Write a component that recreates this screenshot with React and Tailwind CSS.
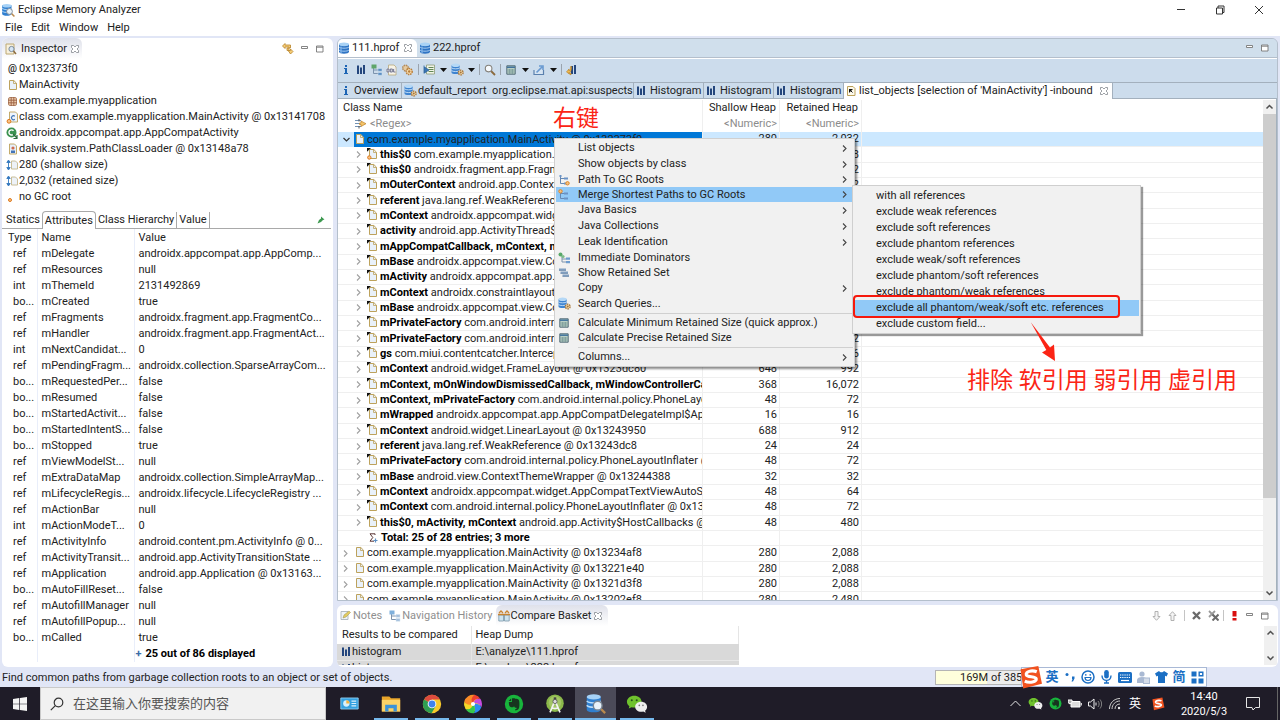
import React from "react";

const DB = () => (
  <svg width="12" height="12" viewBox="0 0 12 12" className="shrink-0">
    <path d="M1 2.200v7.600C1 11 3.200 11.700 6 11.700S11 11 11 9.800V2.200z" fill="#2f74c4" />
    <ellipse cx="6" cy="2.300" rx="5" ry="1.900" fill="#a9d2f5" />
    <path d="M1 5c1 1.600 9 1.600 10 0M1 8c1 1.600 9 1.600 10 0" stroke="#b4d6f5" strokeWidth=".9" fill="none" />
    <path d="M3 4.500v6.500" stroke="#7fb4ea" strokeWidth="1.300" />
  </svg>
);
const DBGear = () => (
  <svg width="13" height="13" viewBox="0 0 12 12" className="shrink-0">
    <path d="M.5 2v7C.5 10.500 8 10.500 8 9V2z" fill="#3d83d0" />
    <ellipse cx="4.300" cy="2" rx="3.800" ry="1.600" fill="#b5d8f6" />
    <path d="M.5 4.500c1 1.200 6.500 1.200 7.500 0M.5 7c1 1.200 6.500 1.200 7.500 0" stroke="#cfe6f9" strokeWidth=".8" fill="none" />
    <circle cx="9" cy="8.800" r="2.200" fill="#f4dcae" stroke="#a8773c" strokeWidth="1.300" strokeDasharray="1.400 .7" />
    <circle cx="9" cy="8.800" r=".9" fill="#a67339" />
  </svg>
);
const AppIcon = ({ className = "h-[14px] w-[14px]" }) => (
  <svg viewBox="0 0 24 24" className={className + " shrink-0"}>
    <path d="M2 4v15c0 4 16 4 16 0V4z" fill="#2f7fd0" />
    <ellipse cx="10" cy="4.500" rx="8" ry="3" fill="#a6d2f7" />
    <path d="M2 9c2 3 14 3 16 0M2 14c2 3 14 3 16 0" stroke="#b9dcf9" strokeWidth="1.600" fill="none" />
    <path d="m18 18 5 5" stroke="#b98a4e" strokeWidth="2.600" />
    <circle cx="14.500" cy="14.500" r="5" fill="#e9f3fb" stroke="#7b8794" strokeWidth="1.600" />
  </svg>
);
const Page = ({ corner, dot }) => (
  <svg width="11" height="12" viewBox="0 0 11 12" className="shrink-0">
    <path d="M2.500 1.500h4.300l2.700 2.700v6.300h-7z" fill="#e9f1fa" stroke="#bda25c" />
    <path d="M6.500 1.500v3h3" fill="none" stroke="#bda25c" strokeWidth=".8" />
    {corner && <path d="M0 0h4L0 3.800z" fill="#111" />}
    {dot && <circle cx="2.300" cy="9.500" r="1.700" fill="#f9c38a" stroke="#dd7a1d" />}
  </svg>
);
const ListPage = () => (
  <svg width="11" height="12" viewBox="0 0 11 12" className="shrink-0">
    <path d="M1.500 1.500h5.500l2 2v7h-7.500z" fill="#fdf9ea" stroke="#bda25c" />
    <path d="M3 4h4l-4 4z" fill="#111" />
    <path d="m4.500 5.500 2 2" stroke="#111" />
  </svg>
);
const Bars = () => (
  <svg width="10" height="11" viewBox="0 0 10 11" className="shrink-0">
    <path d="M1 1.500h2V10H1zM4 3.500h2V10H4zM7 1h2v9H7z" fill="#24467d" />
  </svg>
);
const Info = () => (
  <svg width="6" height="11" viewBox="0 0 6 11" className="shrink-0">
    <path d="M2 1h2v2H2zM1 4h3v5h1v1H1V9h1V5H1z" fill="#1c64b4" />
  </svg>
);
const CloseX = () => (
  <svg width="8" height="8" viewBox="0 0 8 8" className="shrink-0">
    <path d="M.5.5h2L4 2 5.500.5h2v2L6 4l1.500 1.500v2h-2L4 6 2.500 7.500h-2v-2L2 4 .5 2.500z" fill="#fff" stroke="#83888e" strokeWidth=".8" />
  </svg>
);
const MinI = () => (
  <svg width="8" height="8" viewBox="0 0 8 8" className="shrink-0"><path d="M.5 1.500h6v2h-6z" fill="#fff" stroke="#777" strokeWidth=".9" /></svg>
);
const MaxI = () => (
  <svg width="8" height="8" viewBox="0 0 8 8" className="shrink-0"><path d="M.5 1h6.500v6H.5zM.5 2.200H7" fill="#fff" stroke="#777" strokeWidth=".9" /></svg>
);
const TreeI = ({ a = "#5fa56a", b = "#5c8fc4" }) => (
  <svg width="12" height="12" viewBox="0 0 12 12" className="shrink-0">
    <path d="M2.500 4v5.500H7M2.500 6H7" fill="none" stroke="#7c93ad" />
    <path d="M.5.5h5v4h-5z" fill={a} />
    <path d="M7 4.500h4v2.800H7zM7 8.500h4v2.800H7z" fill={b} stroke="#d5e5f3" strokeWidth=".5" />
  </svg>
);
const PathI = ({ top }) => (
  <svg width="12" height="12" viewBox="0 0 12 12" className="shrink-0">
    <path d="M2.500 2v7.500H7M2.500 4.500H7" fill="none" stroke="#6689b4" />
    <path d="M1.500 1h2v2h-2zM6 3.500h4v2H6zM6 8.500h4v2H6z" fill="#6b93c6" />
    {top ? <circle cx="2.500" cy="2.300" r="1.700" fill="#f7c283" stroke="#de8726" /> : <circle cx="9.500" cy="9.300" r="1.700" fill="#f7c283" stroke="#de8726" />}
  </svg>
);
const DomI = () => (
  <svg width="12" height="12" viewBox="0 0 12 12" className="shrink-0">
    <path d="M4 4v6h4M4 7h4" fill="none" stroke="#7c93ad" />
    <circle cx="2.500" cy="2.500" r="2" fill="#58a869" /><circle cx="5" cy="4.500" r="1.600" fill="#7dbd89" />
    <path d="M8 5.500h4v2.200H8zM8 9h4v2.200H8z" fill="#6d9ccf" />
  </svg>
);
const RetI = () => (
  <svg width="12" height="12" viewBox="0 0 12 12" className="shrink-0">
    <path d="M1 1.500h7v2H1zM2.500 4.500H10v2H2.500zM4.500 7.500H11v2H4.500z" fill="#7f9dbf" />
    <path d="M1 3.500h7M2.500 6.500H10M4.500 9.500H11" stroke="#4d6e96" strokeWidth=".5" />
  </svg>
);
const CalcI = () => (
  <svg width="10" height="10" viewBox="0 0 10 10" className="shrink-0">
    <path d="M.8.8h8.400v8.400H.8z" fill="#b9cfc4" stroke="#536c78" />
    <path d="M1 2.200h8" stroke="#41739d" strokeWidth="1.500" /><path d="M1.500 5h7M1.500 7h7M3.700 4v5M6.300 4v5" stroke="#6f8f91" strokeWidth=".7" />
  </svg>
);
const GearI = () => (
  <svg width="13" height="12" viewBox="0 0 13 12" className="shrink-0">
    <circle cx="4.500" cy="4" r="2.800" fill="#e6cba0" stroke="#b28a5a" strokeWidth="1.500" strokeDasharray="1.500 .7" />
    <circle cx="8.200" cy="7.500" r="3" fill="#f6dcae" stroke="#b97e3a" strokeWidth="1.500" strokeDasharray="1.500 .7" />
    <circle cx="8.200" cy="7.500" r="1.200" fill="#b97e3a" />
  </svg>
);
const OqlI = () => (
  <svg width="12" height="12" viewBox="0 0 12 12" className="shrink-0">
    <path d="M2.500 1h5.500l2 2v8h-7.500z" fill="#f7f3e6" stroke="#b7a77c" strokeWidth=".8" />
    <path d="M.5 4.500h9v4h-9z" fill="#e9e9ef" /><path d="M1 5h2v3H1zM4.300 5h2v3h-2zM7.600 5v3H9.500" fill="none" stroke="#5b5d78" strokeWidth=".8" />
  </svg>
);
const RunI = () => (
  <svg width="13" height="12" viewBox="0 0 13 12" className="shrink-0">
    <path d="M3.500 1h8v9h-8z" fill="#f1f4e7" stroke="#8d9b76" strokeWidth=".8" />
    <path d="M5.500 3.500h5M5.500 5.500h5M5.500 7.500h5" stroke="#628856" />
    <path d="M1 1.500v8M1.500 3l4.500 3-4.500 3z" fill="#3b76b4" stroke="#2d659f" strokeWidth=".8" />
  </svg>
);
const MagI = ({ className = "h-[12px] w-[12px]" }) => (
  <svg viewBox="0 0 12 12" className={className}>
    <path d="m7 7 4 4" stroke="#8b6a3c" strokeWidth="1.800" /><circle cx="4.600" cy="4.600" r="3.300" fill="#f7fafd" stroke="#85827c" strokeWidth="1.100" />
  </svg>
);
const ExportI = () => (
  <svg width="12" height="12" viewBox="0 0 12 12" className="shrink-0">
    <path d="M1 6v4.500h9.500V6" fill="#d7e5f3" stroke="#5a80ae" strokeWidth="1.200" />
    <path d="M3.500 8.500 9 3M6 2h4v4" fill="none" stroke="#6a9ad1" strokeWidth="1.600" />
  </svg>
);
const CompareI = () => (
  <svg width="12" height="12" viewBox="0 0 12 12" className="shrink-0">
    <path d="M5 2h2v8H5zM8 1h2v9H8z" fill="#24467d" />
    <path d="M5.500 2.500v2.300C4.800 8 4 9 2.500 9H5v2L.5 8 3 5v2c1-.5 1.500-2 1.500-4.500z" fill="#f0bd52" stroke="#b57c1f" strokeWidth=".6" />
  </svg>
);
const Caret = () => <svg width="7" height="4" viewBox="0 0 7 4"><path d="M0 0h7L3.500 4z" fill="#111" /></svg>;
const Chev = ({ open, className = "stroke-[#a0a0a0]" }) => (
  <svg width="7" height="7" viewBox="0 0 7 7" className={"shrink-0 fill-none " + className}>
    {open ? <path d="m.5 2 3 3 3-3" strokeWidth="1.200" /> : <path d="m2 .5 3 3-3 3" strokeWidth="1.100" />}
  </svg>
);
const InspI = () => (
  <svg width="12" height="12" viewBox="0 0 12 12" className="shrink-0">
    <path d="M1 1h8v10H1z" fill="#f7f0dc" stroke="#bda873" /><circle cx="6.500" cy="6" r="2.600" fill="#d6e6f5" stroke="#7a8b9b" /><path d="m8.500 8 2.500 3" stroke="#8b6a3c" strokeWidth="1.400" />
  </svg>
);
const PkgI = () => (
  <svg width="11" height="11" viewBox="0 0 11 11" className="shrink-0">
    <rect x="1.500" y="1.500" width="8" height="8" rx="1.500" fill="#ecc9a8" stroke="#ab7b5c" strokeWidth=".9" /><path d="M4.200 1v9M6.800 1v9M1 4.200h9M1 6.800h9" stroke="#9c6244" strokeWidth=".9" />
  </svg>
);
const ClassI = () => (
  <svg width="13" height="13" viewBox="0 0 13 13" className="shrink-0">
    <path d="M3.500 1h6l2 2v8h-8z" fill="#eef4fb" stroke="#bda25c" strokeWidth=".9" />
    <path d="M8.800 5.200a2 2 0 1 0 0 3" fill="none" stroke="#3e73b5" strokeWidth="1.200" /><circle cx="3" cy="10.300" r="1.900" fill="#f9c38a" stroke="#dd7a1d" />
  </svg>
);
const GreenC = () => (
  <svg width="13" height="13" viewBox="0 0 13 13" className="shrink-0">
    <circle cx="5.500" cy="5.500" r="5" fill="#3b9250" /><path d="M7.500 3.700a2.600 2.600 0 1 0 0 3.500" fill="none" stroke="#fff" strokeWidth="1.400" /><path d="m7 7 4 4M11 8v3.500H7.500" fill="none" stroke="#2d6b3c" strokeWidth="1.200" />
  </svg>
);
const LoaderI = () => (
  <svg width="12" height="12" viewBox="0 0 12 12" className="shrink-0">
    <path d="M2.500 1h5l2 2v8h-7z" fill="#e6effa" stroke="#bda25c" strokeWidth=".9" /><circle cx="6" cy="5" r="1.600" fill="#cf6b4d" /><path d="M4 10V7.500h4V10z" fill="#4374b8" />
  </svg>
);
const SizeI = () => (
  <svg width="13" height="12" viewBox="0 0 13 12" className="shrink-0">
    <path d="M2.500 2v8M.8 3.500 2.500 1l1.700 2.500zM.8 8.500 2.500 11l1.700-2.500z" stroke="#3579bf" strokeWidth=".9" fill="#3579bf" /><path d="M5.500 2h4l2 2v6h-6z" fill="#edf2f8" stroke="#c4b78c" strokeWidth=".9" />
  </svg>
);
const DotI = () => (
  <svg width="12" height="13" viewBox="0 0 12 13" className="shrink-0"><circle cx="3" cy="9" r="1.500" fill="#f9c38a" stroke="#dd7a1d" /></svg>
);
const SyncI = () => (
  <svg width="12" height="12" viewBox="0 0 12 12"><path d="M3 .5.5 3 3 5.500V4h4v4H6.500L8.500 11 11 8.500 8.500 6v1.500H5V5h3.500V2H3z" fill="#f5cd77" stroke="#b98428" strokeWidth=".8" /></svg>
);
const Sogou = ({ className }) => (
  <svg viewBox="0 0 24 24" className={className}>
    <path d="m2.500 4 17-3 3.500 17-18 4.500z" fill="#f1521f" />
    <path d="M18 6.500c-5-2-11 0-10 3 .9 2.500 9 1 9.500 3.700.5 2.800-6.500 4.600-11 2.300" fill="none" stroke="#fff" strokeWidth="3" />
  </svg>
);
const WeChat = ({ className }) => (
  <svg viewBox="0 0 24 24" className={className}>
    <path d="M9 3C4.500 3 1 6 1 9.500c0 2 1 3.700 2.700 5L3 17l3-1.500c1 .3 2 .4 3 .4 4.500 0 8-2.800 8-6.400S13.500 3 9 3z" fill="#6fc22d" />
    <circle cx="6.300" cy="7.800" r="1.100" fill="#24521a" /><circle cx="11.700" cy="7.800" r="1.100" fill="#24521a" />
    <path d="M16.500 9.500c-3.700 0-6.500 2.500-6.500 5.500s2.800 5.500 6.500 5.500c.8 0 1.600-.1 2.300-.3L21.500 21.500l-.7-2.200C22.200 18.300 23 16.700 23 15c0-3-2.800-5.500-6.500-5.500z" fill="#eee" />
    <circle cx="14.500" cy="13.500" r=".9" fill="#777" /><circle cx="18.500" cy="13.500" r=".9" fill="#777" />
  </svg>
);
const Evernote = ({ className }) => (
  <svg viewBox="0 0 24 24" className={className}>
    <circle cx="12" cy="12" r="11" fill="#18b43c" />
    <path d="M9.500 5.500v4H5.800c0 4 .8 6.500 4.200 6.500 1.500 0 1.800-.5 2-1.500.5 2 1.500 2 3 2v1.500h-1.500v1.700c4 0 5-2 5-8 0-5-1-6-5-6C13 5.200 11 5 9.500 5.500zM8.500 5.500 5.500 8.500h3z" fill="#17351f" />
  </svg>
);
const Explorer = () => (
  <svg viewBox="0 0 24 24" className="h-[20px] w-[20px]"><path d="M1 3h9l2 2h11v16H1z" fill="#e9a52a" /><path d="M1 7h22v14H1z" fill="#fcd367" /><path d="M5 21v-8h14v8h-4v-4H9v4z" fill="#3b93d8" /></svg>
);
const Chrome = () => (
  <svg viewBox="0 0 24 24" className="h-[20px] w-[20px]">
    <circle cx="12" cy="12" r="11" fill="#f7c92c" /><path d="M12 12 2.500 6.500A11 11 0 0 1 21.500 6.500H12z" fill="#dd4b3e" /><path d="m12 12-9.500-5.500A11 11 0 0 0 11.500 23l5-8.500z" fill="#2f9e52" />
    <circle cx="12" cy="12" r="5.200" fill="#fff" /><circle cx="12" cy="12" r="4.100" fill="#3f82ee" />
  </svg>
);
const Pinwheel = () => (
  <svg viewBox="0 0 24 24" className="h-[20px] w-[20px]">
    <circle cx="12" cy="12" r="9" fill="#f4d929" />
    <path d="M12 12C8 9 9 3 14 1a11 11 0 0 1 7 5c-4-1-9 1-9 6z" fill="#f0402e" />
    <path d="M12 12c1-5 5-7 9-6a11 11 0 0 1 1 10c-2-4-6-6-10-4z" fill="#c64be0" />
    <path d="M12 12c5-1 9 1 10 4a11 11 0 0 1-9 7c2-3 2-7-1-11z" fill="#2d8cf0" />
    <path d="M12 12c3 4 3 8 1 11a11 11 0 0 1-10-5c4 1 8-1 9-6z" fill="#37c84b" />
    <path d="M12 12c-1 5-5 7-9 6a11 11 0 0 1-1.500-9c2 3 6 5 10.500 3z" fill="#f4d929" />
    <path d="M12 12C7 14 3 12 1.500 9A11 11 0 0 1 14 1c-4 3-5 7-2 11z" fill="#fa8b27" />
    <circle cx="12" cy="12" r="2.500" fill="#fff" />
  </svg>
);
const Studio = () => (
  <svg viewBox="0 0 24 24" className="h-[20px] w-[20px]">
    <circle cx="12" cy="11" r="10.500" fill="#8bb84a" /><circle cx="12" cy="10" r="7.500" fill="#a3c566" /><path d="M10.500 4h3v4h-3z" fill="#444" />
    <path d="m12 8-6 14M12 8l6 14M7.500 16c3 2 6 2 9 0" stroke="#f2f2f2" strokeWidth="2" fill="none" /><circle cx="12" cy="9" r="2.500" fill="#ddd" stroke="#555" />
  </svg>
);
const Panel = () => (
  <svg viewBox="0 0 24 16" className="h-[13px] w-[19px]"><path d="M1 1h22v14H1z" fill="#35a1e0" stroke="#9ad7f7" /><circle cx="8" cy="8" r="4" fill="#d8f0fc" /><path d="M8 8V4a4 4 0 0 1 4 4z" fill="#f3b13c" /><path d="M14.500 5h6M14.500 8h6M14.500 11h6" stroke="#d8f0fc" strokeWidth="1.300" /></svg>
);

const AtI = () => <span className="w-[13px] text-center text-[10px] font-bold text-[#333]">@</span>;
const inspector = [
  [AtI, "0x132373f0"], [Page, "MainActivity"], [PkgI, "com.example.myapplication"],
  [ClassI, "class com.example.myapplication.MainActivity @ 0x13141708"],
  [GreenC, "androidx.appcompat.app.AppCompatActivity"], [LoaderI, "dalvik.system.PathClassLoader @ 0x13148a78"],
  [SizeI, "280 (shallow size)"], [SizeI, "2,032 (retained size)"], [DotI, "no GC root"],
];
const attrs = [
  ["ref", "mDelegate", "androidx.appcompat.app.AppComp..."], ["ref", "mResources", "null"], ["int", "mThemeId", "2131492869"],
  ["bo...", "mCreated", "true"], ["ref", "mFragments", "androidx.fragment.app.FragmentCo..."], ["ref", "mHandler", "androidx.fragment.app.FragmentAct..."],
  ["int", "mNextCandidat...", "0"], ["ref", "mPendingFragm...", "androidx.collection.SparseArrayCom..."], ["bo...", "mRequestedPer...", "false"],
  ["bo...", "mResumed", "false"], ["bo...", "mStartedActivit...", "false"], ["bo...", "mStartedIntentS...", "false"], ["bo...", "mStopped", "true"],
  ["ref", "mViewModelSt...", "null"], ["ref", "mExtraDataMap", "androidx.collection.SimpleArrayMap..."], ["ref", "mLifecycleRegis...", "androidx.lifecycle.LifecycleRegistry ..."],
  ["ref", "mActionBar", "null"], ["int", "mActionModeT...", "0"], ["ref", "mActivityInfo", "android.content.pm.ActivityInfo @ 0..."],
  ["ref", "mActivityTransit...", "android.app.ActivityTransitionState ..."], ["ref", "mApplication", "android.app.Application @ 0x13163..."],
  ["bo...", "mAutoFillReset...", "false"], ["ref", "mAutofillManager", "null"], ["ref", "mAutofillPopup...", "null"], ["bo...", "mCalled", "true"],
];
const tree = [
  ["this$0", "com.example.myapplication.MainActivity$1", "16", "48"],
  ["this$0", "androidx.fragment.app.FragmentActivity$HostCallbacks", "48", "72"],
  ["mOuterContext", "android.app.ContextImpl @ 0x13237508", "144", "392"],
  ["referent", "java.lang.ref.WeakReference @ 0x13237598", "24", "24"],
  ["mContext", "androidx.appcompat.widget.ContentFrameLayout", "680", "928"],
  ["activity", "android.app.ActivityThread$ActivityClientRecord", "136", "352"],
  ["mAppCompatCallback, mContext, mHost", "", "152", "976"],
  ["mBase", "androidx.appcompat.view.ContextThemeWrapper", "40", "40"],
  ["mActivity", "androidx.appcompat.app.AppCompatDelegate", "24", "64"],
  ["mContext", "androidx.constraintlayout.widget.ConstraintLayout", "712", "912"],
  ["mBase", "androidx.appcompat.view.ContextThemeWrapper", "40", "40"],
  ["mPrivateFactory", "com.android.internal.policy.PhoneLayoutInflater", "48", "72"],
  ["mPrivateFactory", "com.android.internal.policy.PhoneLayoutInflater", "48", "72"],
  ["gs", "com.miui.contentcatcher.Interceptor @ 0x1323a0", "56", "56"],
  ["mContext", "android.widget.FrameLayout @ 0x1323dc80", "648", "992"],
  ["mContext, mOnWindowDismissedCallback, mWindowControllerCallback", "", "368", "16,072"],
  ["mContext, mPrivateFactory", "com.android.internal.policy.PhoneLayoutInflater", "48", "72"],
  ["mWrapped", "androidx.appcompat.app.AppCompatDelegateImpl$AppCompat", "16", "16"],
  ["mContext", "android.widget.LinearLayout @ 0x13243950", "688", "912"],
  ["referent", "java.lang.ref.WeakReference @ 0x13243dc8", "24", "24"],
  ["mPrivateFactory", "com.android.internal.policy.PhoneLayoutInflater @", "48", "72"],
  ["mBase", "android.view.ContextThemeWrapper @ 0x13244388", "32", "32"],
  ["mContext", "androidx.appcompat.widget.AppCompatTextViewAutoSize", "48", "64"],
  ["mContext", "com.android.internal.policy.PhoneLayoutInflater @ 0x13244", "48", "72"],
  ["this$0, mActivity, mContext", "android.app.Activity$HostCallbacks @ 0x132", "48", "480"],
];
const roots = [["0x13234af8", "2,088"], ["0x13221e40", "2,088"], ["0x1321d3f8", "2,088"], ["0x13202ef8", "2,480"]];
const menu = [
  ["List objects", null, 1], ["Show objects by class", null, 1], ["Path To GC Roots", <PathI />, 1], ["Merge Shortest Paths to GC Roots", <PathI top />, 1, 1],
  ["Java Basics", null, 1], ["Java Collections", null, 1], ["Leak Identification", null, 1], ["Immediate Dominators", <DomI />], ["Show Retained Set", <RetI />],
  ["Copy", null, 1], ["Search Queries...", <DBGear />], null, ["Calculate Minimum Retained Size (quick approx.)", <CalcI />], ["Calculate Precise Retained Size", <CalcI />], null, ["Columns...", null, 1],
];
const sub = ["with all references", "exclude weak references", "exclude soft references", "exclude phantom references", "exclude weak/soft references", "exclude phantom/soft references", "exclude phantom/weak references", "exclude all phantom/weak/soft etc. references", "exclude custom field..."];

const Slot = ({ className = "w-[16px]", children, label }) => (
  <button aria-label={label} className={"flex h-4 shrink-0 items-center justify-center " + className}>{children}</button>
);
const Bar = () => <span className="mx-[2px] h-[11px] w-px shrink-0 bg-[#9aa3ad]" />;
const Num = ({ children }) => <td className="border-b border-l border-[#efefef] pr-[2px] text-right">{children}</td>;

function Inspector() {
  return (
    <section className="flex w-[331px] shrink-0 flex-col overflow-hidden rounded-md bg-white">
      <header className="flex h-[21px] shrink-0 items-center">
        <h2 className="flex h-full w-[80px] items-center gap-[4px] rounded-tr-md bg-linear-to-b from-[#dfe1ea] to-white pl-[3px]">
          <InspI /><span className="flex-1">Inspector</span><span className="pr-[5px]"><CloseX /></span>
        </h2>
        <div className="ml-auto flex items-center gap-[7px] pr-[9px]"><SyncI /><MinI /><MaxI /></div>
      </header>
      <ul className="mt-[2px]">
        {inspector.map(([I, t]) => (
          <li key={t} className="flex h-4 items-center pl-[4px]"><span className="flex w-[13px] justify-center"><I /></span><span>{t}</span></li>
        ))}
      </ul>
      <div role="tablist" className="mt-[6px] mr-[2px] flex h-[18px] shrink-0 items-end border-b border-[#a9a9a9]">
        <button role="tab" className="h-[16px] pr-[2px] pl-[4px]">Statics</button>
        <button role="tab" aria-selected="true" className="-mb-px h-[18px] rounded-t-sm border border-b-0 border-[#a9a9a9] bg-white px-[2px]">Attributes</button>
        <button role="tab" className="h-[16px] border-r border-[#a9a9a9] px-[2px]">Class Hierarchy</button>
        <button role="tab" className="h-[16px] border-r border-[#a9a9a9] px-[2px]">Value</button>
        <svg width="8" height="8" viewBox="0 0 8 8" className="mr-[6px] mb-[4px] ml-auto"><path d="m4 .5 3.500 3-1.500.5-2 2-3.500 1.500L2 4l2-1.500z" fill="#3d9950" /></svg>
      </div>
      <table className="w-full table-fixed border-collapse text-left whitespace-nowrap">
        <colgroup><col className="w-[35px]" /><col className="w-[97px]" /><col /></colgroup>
        <thead><tr className="h-[17px]"><th className="pl-[6px] font-normal">Type</th><th className="border-l border-[#e9eefa] pl-[4px] font-normal">Name</th><th className="border-l border-[#e9eefa] pl-[4px] font-normal">Value</th></tr></thead>
        <tbody>
          {attrs.map(([a, b, c]) => (
            <tr key={b} className="h-4"><td className="pl-[11px]">{a}</td><td className="border-l border-[#e9eefa] pl-[4px]">{b}</td><td className="border-l border-[#e9eefa] pl-[4px]">{c}</td></tr>
          ))}
          <tr className="h-4 font-bold text-black"><td /><td className="border-l border-[#e9eefa]" /><td className="border-l border-[#e9eefa]"><span className="mr-[4px] ml-px inline-block text-[#3d6ea8]">+</span>25 out of 86 displayed</td></tr>
        </tbody>
      </table>
    </section>
  );
}

function TreeTable() {
  return (
    <table className="h-[508px] w-full table-fixed border-separate border-spacing-0 whitespace-nowrap">
      <colgroup><col className="w-[364px]" /><col className="w-[77px]" /><col className="w-[82px]" /><col /></colgroup>
      <thead>
        <tr className="h-4"><th className="pl-[5px] text-left font-normal">Class Name</th><th className="border-l border-[#efefef] pr-[3px] text-right font-normal">Shallow Heap</th><th className="border-l border-[#efefef] pr-[3px] text-right font-normal">Retained Heap</th><th className="border-l border-[#efefef]" /></tr>
        <tr className="h-4 text-[#8b8b8b]">
          <td><div className="flex items-center gap-[3px] pl-[17px]"><svg width="12" height="12" viewBox="0 0 12 12"><path d="M0 2.500h6M0 5.500h5M0 8.500h6" stroke="#7292b4" /><path d="M6 3v2H4.500v1.500H6v2L11 5.700z" fill="#f4c469" stroke="#bb8128" strokeWidth=".7" /><path d="M4 1v2.500M4 8v2.500" stroke="#555" /></svg>&lt;Regex&gt;</div></td>
          <td className="border-l border-[#efefef] pr-[2px] text-right">&lt;Numeric&gt;</td><td className="border-l border-[#efefef] pr-[2px] text-right">&lt;Numeric&gt;</td><td className="border-l border-[#efefef]" />
        </tr>
      </thead>
      <tbody className="leading-[14px]">
        <tr className="bg-[#cce8ff]">
          <td className="p-0"><div className="flex h-[15px] items-center"><span className="flex w-[16px] shrink-0 justify-center"><Chev open className="stroke-[#333]" /></span><span className="flex h-full flex-1 items-center gap-[2px] overflow-hidden bg-[#0078d7]"><span className="pb-[2px]"><Page /></span>com.example.myapplication.MainActivity @ 0x132373f0</span></div></td>
          <Num>280</Num><Num>2,032</Num><Num />
        </tr>
        {tree.map(([a, b, s, r], i) => (
          <tr key={i}>
            <td className="border-b border-[#efefef]"><div className="flex h-[14px] items-center overflow-hidden pl-[17px]"><Chev /><span className="mr-[2px] ml-[5px] flex pb-[2px]"><Page corner dot={i === 0} /></span><span><b className="text-black">{a}</b> {b}</span></div></td>
            <Num>{s}</Num><Num>{r}</Num><Num />
          </tr>
        ))}
        <tr>
          <td className="border-b border-[#efefef]"><div className="flex items-center gap-[3px] pl-[31px] font-bold text-black"><svg width="9" height="10" viewBox="0 0 9 10"><path d="M6 2V.8H1L3.800 4.500 1 8.200h4" fill="none" stroke="#5a3535" /><path d="M6.500 5.500v4M4.500 7.500h4" stroke="#5c8fc4" strokeWidth="1.200" /></svg>Total: 25 of 28 entries; 3 more</div></td>
          <Num /><Num /><Num />
        </tr>
        {roots.map(([a, r]) => (
          <tr key={a}>
            <td className="border-b border-[#efefef]"><div className="flex h-[14px] items-center pl-[4px]"><Chev /><span className="mr-[2px] ml-[5px] flex pb-[2px]"><Page /></span>com.example.myapplication.MainActivity @ {a}</div></td>
            <Num>280</Num><Num>{r}</Num><Num />
          </tr>
        ))}
      </tbody>
    </table>
  );
}

const VScroll = ({ thumb }) => (
  <div className="flex w-[13px] shrink-0 flex-col items-center bg-[#f0f0f0]">
    <svg width="13" height="14" viewBox="0 0 13 14" className="shrink-0"><path d="m3.500 8.500 3-3 3 3" fill="none" stroke="#505050" strokeWidth="1.500" /></svg>
    <span className={"w-full " + thumb} /><span className="flex-1" />
    <svg width="13" height="14" viewBox="0 0 13 14" className="shrink-0"><path d="m3.500 5.500 3 3 3-3" fill="none" stroke="#505050" strokeWidth="1.500" /></svg>
  </div>
);
const InnerTab = ({ icon, children, w }) => (
  <button role="tab" className={"flex h-full shrink-0 items-center border-r border-[#a3b0bd] pl-[2px] " + w}><span className="flex w-[14px] shrink-0">{icon}</span><span className="whitespace-pre">{children}</span></button>
);

function Editor() {
  return (
    <section className="flex min-h-0 flex-1 flex-col overflow-hidden rounded-t-md border border-[#b4bfcc] bg-[#ccdcec]">
      <header className="flex h-[19px] shrink-0 items-center border-b border-[#b4bfcc] bg-[#d0dfec]">
        <button role="tab" aria-selected="true" className="flex h-full w-[79px] items-center gap-[2px] rounded-tr-md bg-white"><DB /><span className="flex-1 text-left">111.hprof</span><span className="pr-[5px]"><CloseX /></span></button>
        <button role="tab" className="flex h-full items-center gap-[2px] pl-[2px]"><DB />222.hprof</button>
        <div className="ml-auto flex gap-[7px] pr-[8px]"><MinI /><MaxI /></div>
      </header>
      <div role="toolbar" className="flex h-[24px] shrink-0 items-center border-t border-white pb-[2px]">
        <Slot label="Overview" className="w-[15px]"><Info /></Slot><Slot label="Histogram"><Bars /></Slot><Slot label="Dominator tree" className="w-[15px]"><TreeI /></Slot><Slot label="OQL" className="w-[15px]"><OqlI /></Slot><Slot label="Threads"><GearI /></Slot><span className="flex h-[11px] px-px"><Bar /></span>
        <Slot label="Run report" className="w-[15px]"><RunI /></Slot><Slot label="Report list" className="w-[12px]"><Caret /></Slot><Slot label="Query browser"><DBGear /></Slot><Slot label="Query list" className="w-[12px]"><Caret /></Slot><Bar />
        <Slot label="Find"><MagI /></Slot><Bar /><Slot label="Calculate"><CalcI /></Slot><Slot label="Calculate list" className="w-[12px]"><Caret /></Slot><Slot label="Export"><ExportI /></Slot><Slot label="Export list" className="w-[12px]"><Caret /></Slot><Bar />
        <Slot label="Compare"><CompareI /></Slot>
      </div>
      <div role="tablist" className="flex h-[17px] shrink-0 border-y border-[#a3b0bd]">
        <InnerTab w="w-[64px]" icon={<span className="flex w-[12px] justify-center"><Info /></span>}>Overview</InnerTab>
        <InnerTab w="w-[232px]" icon={<DBGear />}>{"default_report  org.eclipse.mat.api:suspects"}</InnerTab>
        <InnerTab w="w-[70px]" icon={<Bars />}>Histogram</InnerTab><InnerTab w="w-[70px]" icon={<Bars />}>Histogram</InnerTab><InnerTab w="w-[70px]" icon={<Bars />}>Histogram</InnerTab>
        <button role="tab" aria-selected="true" className="-mb-px flex w-[269px] shrink-0 items-center gap-[2px] border-r border-[#a3b0bd] bg-white pl-[2px]"><ListPage /><span className="flex-1 text-left">list_objects [selection of 'MainActivity'] -inbound</span><span className="pr-[4px]"><CloseX /></span></button>
      </div>
      <div className="flex min-h-0 flex-1 border-r border-[#a3b0bd] bg-white pt-px">
        <div className="min-w-0 flex-1 overflow-hidden"><TreeTable /></div>
        <VScroll thumb="h-[384px] bg-[#cdcdcd]" />
      </div>
    </section>
  );
}

function Basket() {
  return (
    <section className="mt-[4px] flex h-[62px] shrink-0 flex-col overflow-hidden rounded-md bg-white">
      <header className="flex h-[21px] shrink-0 items-center text-[#8f8f8f]">
        <button role="tab" className="flex items-center gap-[2px] pl-[3px]"><svg width="11" height="11" viewBox="0 0 11 11"><path d="M1 1.500h7v8H1z" fill="#eef3f7" stroke="#a2acb5" strokeWidth=".8" /><path d="m3 8 1-3 5-4 1.500 1.500L6 7z" fill="#e3cc60" stroke="#9b9355" strokeWidth=".5" /></svg>Notes</button>
        <button role="tab" className="flex items-center gap-px pl-[7px]"><TreeI a="#7fb0dc" b="#a5bfdc" />Navigation History</button>
        <button role="tab" aria-selected="true" className="ml-[3px] flex h-full w-[112px] items-center gap-px rounded-t-md bg-linear-to-b from-[#dfe1ea] to-white pl-[2px] text-[#222]">
          <svg width="12" height="12" viewBox="0 0 12 12" className="shrink-0"><path d="M.8 5h4.700v6H.8zM6.500 5h4.700v6H6.500z" fill="#cfe4ef" stroke="#7897a9" strokeWidth=".8" /><path d="M0 4.500h12M1 3l2-2 2 2M7 3l2-2 2 2" fill="none" stroke="#c88532" strokeWidth="1.300" /></svg>
          <span className="flex-1 text-left">Compare Basket</span><span className="pr-[6px]"><CloseX /></span>
        </button>
        <div className="ml-auto flex items-center gap-[7px] pr-[9px]">
          <svg width="9" height="10" viewBox="0 0 9 10"><path d="M3 .5h3v5h2L4.500 9.300 1 5.500h2z" fill="#f5f5f5" stroke="#aaa" strokeWidth=".9" /></svg>
          <svg width="9" height="10" viewBox="0 0 9 10"><path d="M3 9.500h3v-5h2L4.500.7 1 4.500h2z" fill="#f5f5f5" stroke="#aaa" strokeWidth=".9" /></svg>
          <span className="h-[11px] w-px bg-[#c4c4c4]" />
          <svg width="9" height="9" viewBox="0 0 9 9"><path d="m1 1 7 7M8 1 1 8" stroke="#6a6a6a" strokeWidth="2.400" /></svg>
          <svg width="11" height="11" viewBox="0 0 11 11"><path d="m1 1 6 6M7 1 1 7" stroke="#999" strokeWidth="1.800" /><path d="m4.500 4.500 6 6M10.500 4.500l-6 6" stroke="#6a6a6a" strokeWidth="2" /></svg>
          <span className="-ml-[3px] h-[11px] w-px bg-[#c4c4c4]" />
          <svg width="8" height="10" viewBox="0 0 8 10"><path d="M1.500 0h4v5.500h-4zM1.500 7h4v2.500h-4z" fill="#d90f0f" /></svg>
          <MinI /><MaxI />
        </div>
      </header>
      <div className="flex min-h-0 flex-1 pb-[2px]">
        <div className="min-w-0 flex-1 overflow-hidden">
          <table className="w-[402px] table-fixed border-collapse text-left whitespace-nowrap">
            <colgroup><col className="w-[134px]" /><col /></colgroup>
            <thead><tr className="h-[18px]"><th className="pl-[5px] font-normal">Results to be compared</th><th className="border-x border-[#e5e5e5] pl-[4px] font-normal">Heap Dump</th></tr></thead>
            <tbody>
              {["E:\\analyze\\111.hprof", "E:\\analyze\\222.hprof"].map((t) => (
                <tr key={t} className="h-4 border-b border-[#e8e8e8] bg-[#d9d9d9]"><td><div className="flex items-center pl-[4px]"><Bars /><span className="pl-px">histogram</span></div></td><td className="border-l border-[#e5e5e5] pl-[4px]">{t}</td></tr>
              ))}
            </tbody>
          </table>
        </div>
        <VScroll thumb="h-0" /><span className="w-px" />
      </div>
    </section>
  );
}

function ContextMenus() {
  return (
    <>
      <div role="menu" className="absolute top-[138px] left-[554px] w-[301px] border border-[#d0d0d0] bg-[#f1f1f1] px-px py-px shadow-[2px_2px_2px_rgba(0,0,0,0.45)]">
        {menu.map((m, i) => m ? (
          <button key={i} role="menuitem" className={"flex w-full items-center " + (m[1] ? "h-[15px] " : "h-4 ") + (m[3] ? "bg-[#91c9f7]" : "")}>
            <span className="flex w-[16px] shrink-0 justify-center">{m[1]}</span><span className="flex-1 pl-[6px] text-left">{m[0]}</span>{m[2] && <span className="pr-[5px]"><Chev className="stroke-[#444]" /></span>}
          </button>
        ) : <div key={i} role="separator" className="my-px ml-[22px] h-[2px] border-b border-[#d0d0d0]" />)}
      </div>
      <div role="menu" className="absolute top-[185px] left-[852px] w-[289px] border border-[#cfcfcf] bg-[#f1f1f1] pt-[2px] pr-px pb-px shadow-[2px_2px_1px_rgba(0,0,0,0.4)]">
        {sub.map((t, i) => <button key={t} role="menuitem" className={"flex h-4 w-full items-center pl-[23px] " + (i === 7 ? "bg-[#91c9f7]" : "")}>{t}</button>)}
      </div>
      <div className="absolute top-[295px] left-[853px] h-[23px] w-[267px] rounded-[4px] border-2 border-[#f6180c]" />
      <svg width="26" height="40" viewBox="0 0 26 40" className="absolute top-[322px] left-[1030px]"><path d="M.8.300 20 25.500l4-3 1 16.500-13-8.500 4.300-2.500z" fill="#fb2415" /></svg>
      <p className="absolute top-[366px] left-[967px] text-[23px] leading-[30px] whitespace-nowrap text-[#fb2415]">排除 软引用 弱引用 虚引用</p>
      <p className="absolute top-[104px] left-[553px] text-[23px] leading-[30px] text-[#fb2415]">右键</p>
    </>
  );
}

function ImeBar() {
  return (
    <div className="absolute right-[73px] bottom-[33px] flex h-[20px] items-center border border-[#a9b9d6] bg-white text-[13px] font-bold text-[#1b6fc4]">
      <span className="-ml-[4px] flex w-[25px] justify-center"><Sogou className="h-[25px] w-[25px] shrink-0" /></span>
      <Slot label="Language" className="w-[18px]">英</Slot>
      <Slot label="Punctuation" className="w-[18px]"><svg width="12" height="12" viewBox="0 0 12 12"><circle cx="3" cy="3.500" r="1.500" fill="#1b6fc4" /><path d="M8 5.500h2.500v2L9 10.500H7.500L8.500 8H8z" fill="#1b6fc4" /></svg></Slot>
      <Slot label="Emoji" className="w-[18px]"><svg width="14" height="14" viewBox="0 0 14 14"><circle cx="7" cy="7" r="6" fill="none" stroke="#1b6fc4" strokeWidth="1.500" /><path d="M4 7.500c0 4 6 4 6 0zM4.800 4v1.800M9.200 4v1.800" stroke="#1b6fc4" strokeWidth="1.200" fill="none" /></svg></Slot>
      <Slot label="Voice" className="w-[19px]"><svg width="11" height="14" viewBox="0 0 11 14"><rect x="3.200" y="0" width="4.600" height="8.500" rx="2.300" fill="#1b6fc4" /><path d="M1 5.500c0 6.500 9 6.500 9 0M5.500 10v3M3 13h5" stroke="#1b6fc4" strokeWidth="1.400" fill="none" /></svg></Slot>
      <Slot label="Keyboard" className="w-[18px]"><svg width="14" height="11" viewBox="0 0 14 11"><rect width="14" height="11" rx="1.500" fill="#1b6fc4" /><path d="M2 3h10M2 5.500h10" stroke="#fff" strokeWidth="1.200" strokeDasharray="1.300 .9" /><path d="M3 8.500h8" stroke="#fff" strokeWidth="1.200" /></svg></Slot>
      <Slot label="Account" className="w-[18px]"><svg width="13" height="13" viewBox="0 0 13 13"><circle cx="5" cy="3" r="2.600" fill="#a9b9d3" /><path d="M0 12V9c0-4 10-4 10 0v3z" fill="#a9b9d3" /><rect x="6.500" y="7" width="6" height="5.500" fill="#d4dce9" stroke="#a9b9d3" /></svg></Slot>
      <Slot label="Skin" className="w-[18px]"><svg width="13" height="12" viewBox="0 0 13 12"><path d="M4 0c1 1.800 4 1.800 5 0l4 2.500-1.500 3-1.500-.7V12H3V4.800l-1.500.7L0 2.500z" fill="#1b6fc4" /></svg></Slot>
      <Slot label="Simplified" className="w-[18px]">简</Slot>
      <Slot label="Toolbox" className="w-[18px]"><svg width="13" height="13" viewBox="0 0 13 13"><path d="M.5.5h5v5h-5zM.5 7.500h5v5h-5zM7.500 7.500h5v5h-5z" fill="#1b6fc4" /><path d="M8.200 1.200h3.600v3.600H8.200z" fill="none" stroke="#1b6fc4" strokeWidth="1.400" /></svg></Slot>
    </div>
  );
}

function Taskbar() {
  const apps = [["Control Panel", <Panel />], ["File Explorer", <Explorer />, 1], ["Chrome", <Chrome />, 1], ["Browser", <Pinwheel />, 1], ["Evernote", <Evernote className="h-[20px] w-[20px]" />, 1], ["Android Studio", <Studio />, 1], ["Memory Analyzer", <AppIcon className="h-[21px] w-[21px]" />, 2], ["WeChat", <WeChat className="h-[22px] w-[22px]" />, 1]];
  return (
    <footer className="flex h-[33px] shrink-0 bg-[#1f1c28] text-white">
      <button aria-label="Start" className="flex w-[40px] items-center justify-center"><svg width="14" height="14" viewBox="0 0 14 14"><path d="M0 2 6.300 1v5.700H0zM7 1l7-1v6.700H7zM0 7.300h6.300V13L0 12zM7 7.300h7V14l-7-1z" fill="#f4f4f4" /></svg></button>
      <label className="flex w-[286px] items-center gap-[9px] border border-[#c9c9c9] bg-[#f1f1f1] pl-[9px]">
        <svg width="14" height="14" viewBox="0 0 14 14" className="shrink-0"><circle cx="8.500" cy="5.500" r="4.300" fill="none" stroke="#333" strokeWidth="1.200" /><path d="M5.300 8.700.8 13.200" stroke="#333" strokeWidth="1.200" /></svg>
        <input aria-label="搜索" placeholder="在这里输入你要搜索的内容" className="min-w-0 flex-1 bg-transparent text-[13px] outline-none placeholder:text-[#555]" />
      </label>
      <nav className="ml-[3px] flex">
        {apps.map(([n, icon, st]) => (
          <button key={n} aria-label={n} className={"flex w-[41px] flex-col items-center " + (st === 2 ? "bg-[#4b4a58]" : "")}>
            <span className="flex flex-1 items-center pt-[2px]">{icon}</span>
            <span className={"h-[2px] " + (st === 2 ? "w-full bg-[#76b9ed]" : st ? "w-[34px] bg-[#76b9ed]" : "w-0")} />
          </button>
        ))}
      </nav>
      <div className="ml-auto flex items-center text-[12px]">
        <Slot label="Hidden icons" className="w-[20px]"><svg width="11" height="7" viewBox="0 0 11 7"><path d="m.5 6 5-5 5 5" fill="none" stroke="#e5e5e5" /></svg></Slot>
        <Slot label="WeChat" className="w-[20px]"><WeChat className="h-[15px] w-[15px]" /></Slot>
        <Slot label="Evernote" className="w-[20px]"><Evernote className="h-[13px] w-[13px]" /></Slot>
        <Slot label="Battery" className="w-[20px]"><svg width="14" height="9" viewBox="0 0 14 9"><path d="M3 2.500h9V8H3z" fill="#ddd" stroke="#fff" /><path d="M13.300 4v2.500M0 1h4v2.500L2 5 0 3.500z" stroke="#fff" fill="#aaa" /></svg></Slot>
        <Slot label="Volume" className="w-[20px]"><svg width="14" height="12" viewBox="0 0 14 12"><path d="M.5 4h2L6 1v10L2.500 8h-2zM8 4.500v3" fill="none" stroke="#eee" /><path d="M10 3c1.500 2 1.500 4 0 6M12 1.500c2.200 3 2.200 6 0 9" fill="none" stroke="#888" /></svg></Slot>
        <Slot label="Network" className="w-[20px]"><svg width="12" height="12" viewBox="0 0 12 12"><circle cx="10" cy="10" r="1.200" fill="#eee" /><path d="M.5 11C.5 5 5 .5 11 .5M3 11c0-4.500 3.500-8 8-8M6 11c0-3 2-5 5-5" fill="none" stroke="#ccc" /></svg></Slot>
        <Slot label="Input language" className="w-[20px]">英</Slot>
        <Slot label="Sogou" className="w-[26px]"><Sogou className="h-[14px] w-[14px]" /></Slot>
        <time className="w-[66px] text-center text-[11px] leading-[15px]">14:40<br />2020/5/3</time>
        <Slot label="Notifications" className="w-[32px]"><svg width="14" height="14" viewBox="0 0 14 14"><path d="M.5.5h13v10H9.500L7 13l-1-2.500H.5z" fill="none" stroke="#e5e5e5" /></svg></Slot>
        <span className="ml-[8px] h-[33px] w-[3px] border-l border-[#666]" />
      </div>
    </footer>
  );
}

export default function App() {
  return (
    <div className="relative flex h-screen flex-col overflow-hidden bg-[#e1e6f6] font-[Roboto,'Noto_Sans_CJK_SC',sans-serif] text-[11px] leading-[14px] text-[#222]">
      <header className="flex h-[18px] shrink-0 items-center gap-[3px] bg-white pt-[2px] pl-px">
        <AppIcon /><h1>Eclipse Memory Analyzer</h1>
        <div className="ml-auto flex items-center gap-[29px] pr-[16px]">
          <svg width="10" height="10" viewBox="0 0 10 10"><path d="M1 4.500h8" stroke="#333" /></svg>
          <svg width="10" height="10" viewBox="0 0 10 10"><path d="M1.500 3h6v6h-6zM3 3V1h6v6.500H7.500" fill="none" stroke="#333" /></svg>
          <svg width="10" height="10" viewBox="0 0 10 10"><path d="m1 1 8 8M9 1 1 9" stroke="#333" /></svg>
        </div>
      </header>
      <nav className="flex h-[18px] shrink-0 items-center gap-[9px] bg-white pt-px pl-[5px]"><button>File</button><button>Edit</button><button>Window</button><button>Help</button></nav>
      <main className="flex min-h-0 flex-1 gap-[4px] px-[2px] pt-[2px] pb-px">
        <Inspector />
        <div className="flex min-w-0 flex-1 flex-col"><Editor /><Basket /></div>
      </main>
      <div className="flex h-[19px] shrink-0 items-center pl-[2px]">
        <span>Find common paths from garbage collection roots to an object or set of objects.</span>
        <div className="mr-[230px] ml-auto flex h-[15px] w-[115px] items-center border border-[#b5b5b5] bg-linear-to-r from-[#ffffdc] from-45% to-[#ececec] to-45% pl-[24px]"><span>169M of 385M</span></div>
      </div>
      <Taskbar />
      <ImeBar />
      <ContextMenus />
    </div>
  );
}
